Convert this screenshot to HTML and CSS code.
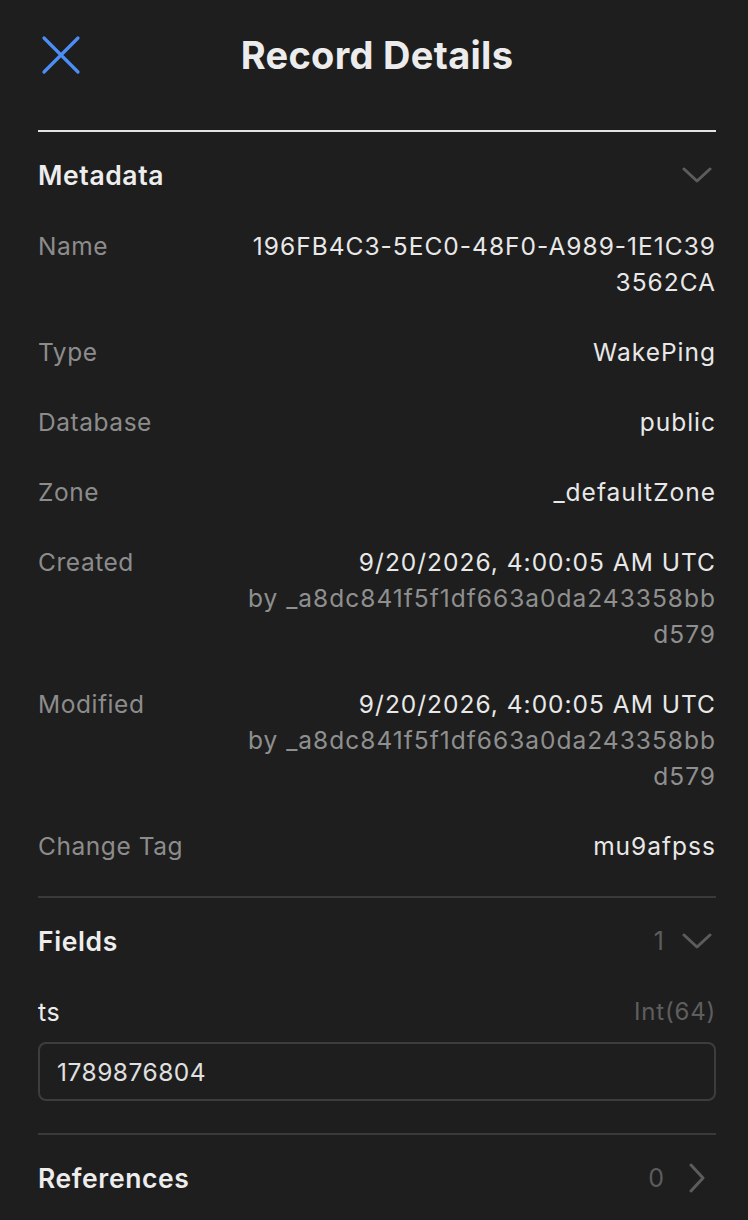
FILE: index.html
```html
<!DOCTYPE html>
<html>
<head>
<meta charset="utf-8">
<link rel="stylesheet" href="styles.css">
</head>
<body>
<div class="page">
  <header class="topbar">
    <button class="close" aria-label="Close">
      <svg width="40" height="40" viewBox="0 0 40 40"><path d="M3 3 L37 37 M37 3 L3 37" stroke="#4b8ef5" stroke-width="3.2" stroke-linecap="round" fill="none"/></svg>
    </button>
    <h1 class="title">Record Details</h1>
  </header>

  <section class="section first">
    <div class="sec-head">
      <h2>Metadata</h2>
      <div class="sec-meta">
        <svg class="chev" width="30" height="18" viewBox="0 0 30 18"><path d="M2 3 L15 15 L28 3" stroke="#5c5c5c" stroke-width="3" fill="none" stroke-linecap="round" stroke-linejoin="round"/></svg>
      </div>
    </div>
    <div class="rows">
      <div class="row"><div class="label">Name</div><div class="value">196FB4C3-5EC0-48F0-A989-1E1C393562CA</div></div>
      <div class="row"><div class="label">Type</div><div class="value">WakePing</div></div>
      <div class="row"><div class="label">Database</div><div class="value">public</div></div>
      <div class="row"><div class="label">Zone</div><div class="value">_defaultZone</div></div>
      <div class="row"><div class="label">Created</div><div class="value">9/20/2026, 4:00:05 AM UTC<div class="sub">by _a8dc841f5f1df663a0da243358bbd579</div></div></div>
      <div class="row"><div class="label">Modified</div><div class="value">9/20/2026, 4:00:05 AM UTC<div class="sub">by _a8dc841f5f1df663a0da243358bbd579</div></div></div>
      <div class="row"><div class="label">Change Tag</div><div class="value">mu9afpss</div></div>
    </div>
  </section>

  <section class="section">
    <div class="sec-head">
      <h2>Fields</h2>
      <div class="sec-meta">
        <span class="count">1</span>
        <svg class="chev" width="30" height="18" viewBox="0 0 30 18"><path d="M2 3 L15 15 L28 3" stroke="#5c5c5c" stroke-width="3" fill="none" stroke-linecap="round" stroke-linejoin="round"/></svg>
      </div>
    </div>
    <div class="field">
      <div class="field-head"><span class="field-name">ts</span><span class="field-type">Int(64)</span></div>
      <div class="input">1789876804</div>
    </div>
  </section>

  <section class="section">
    <div class="sec-head">
      <h2>References</h2>
      <div class="sec-meta refs">
        <span class="count">0</span>
        <svg class="chev-r" width="18" height="30" viewBox="0 0 18 30"><path d="M3 2 L15 15 L3 28" stroke="#5c5c5c" stroke-width="3" fill="none" stroke-linecap="round" stroke-linejoin="round"/></svg>
      </div>
    </div>
  </section>
</div>
</body>
</html>
```

FILE: styles.css
```css
html, body {
  margin: 0;
  padding: 0;
  background: #1e1e1e;
}
body {
  font-family: Inter, "Noto Sans", "DejaVu Sans", sans-serif;
  color: #e6e6e6;
  width: 748px;
  height: 1220px;
  overflow: hidden;
}
.page {
  padding: 0 32px 0 38px;
}
.topbar {
  display: flex;
  align-items: center;
  justify-content: center;
  position: relative;
  height: 132px;
  border-bottom: 2px solid #e3e3e3;
  box-sizing: border-box;
  padding-bottom: 20px;
}
.topbar, .section { width: 678px; }
.close {
  position: absolute;
  left: 3px;
  top: 35px;
  background: none;
  border: 0;
  padding: 0;
  width: 40px;
  height: 40px;
}
.close svg { display: block; }
.title {
  margin: 0;
  font-size: 38px;
  font-weight: 700;
  letter-spacing: 0.3px;
  color: #ececec;
}
.section {
  border-top: 2px solid #3a3a3a;
  padding: 25px 0 32px;
}
.section.first { border-top: 0; }
.sec-head {
  display: flex;
  align-items: center;
  justify-content: space-between;
  height: 36px;
}
.sec-head h2 {
  margin: 0;
  font-size: 26.5px;
  font-weight: 600;
  letter-spacing: 0.6px;
  color: #ededed;
}
.sec-meta {
  display: flex;
  align-items: center;
  gap: 18px;
  color: #5c5c5c;
  font-size: 25px;
}
.sec-meta.refs { gap: 24px; }
.chev { margin-right: 4px; }
.chev-r { margin-right: 10px; }
.rows {
  display: flex;
  flex-direction: column;
  gap: 34px;
  margin-top: 35px;
}
.row {
  display: flex;
  justify-content: space-between;
  font-size: 24.5px;
  letter-spacing: 0.55px;
  line-height: 36px;
}
.label { color: #8c8c8c; white-space: nowrap; }
.value {
  width: 476px;
  text-align: right;
  word-break: break-all;
  letter-spacing: 1px;
  color: #e8e8e8;
}
.sub { color: #8f8f8f; }
.field { margin-top: 35px; }
.field-head {
  display: flex;
  justify-content: space-between;
  line-height: 36px;
  font-size: 25px;
  letter-spacing: 0.5px;
}
.field-name { color: #ececec; }
.field-type { color: #5e5e5e; font-size: 24px; letter-spacing: 0.8px; }
.input {
  margin-top: 12px;
  height: 59px;
  box-sizing: border-box;
  border: 2px solid #3d3d3d;
  border-radius: 8px;
  padding: 0 17px;
  display: flex;
  align-items: center;
  font-size: 24.5px;
  letter-spacing: 0.5px;
  color: #e0e0e0;
}
```
